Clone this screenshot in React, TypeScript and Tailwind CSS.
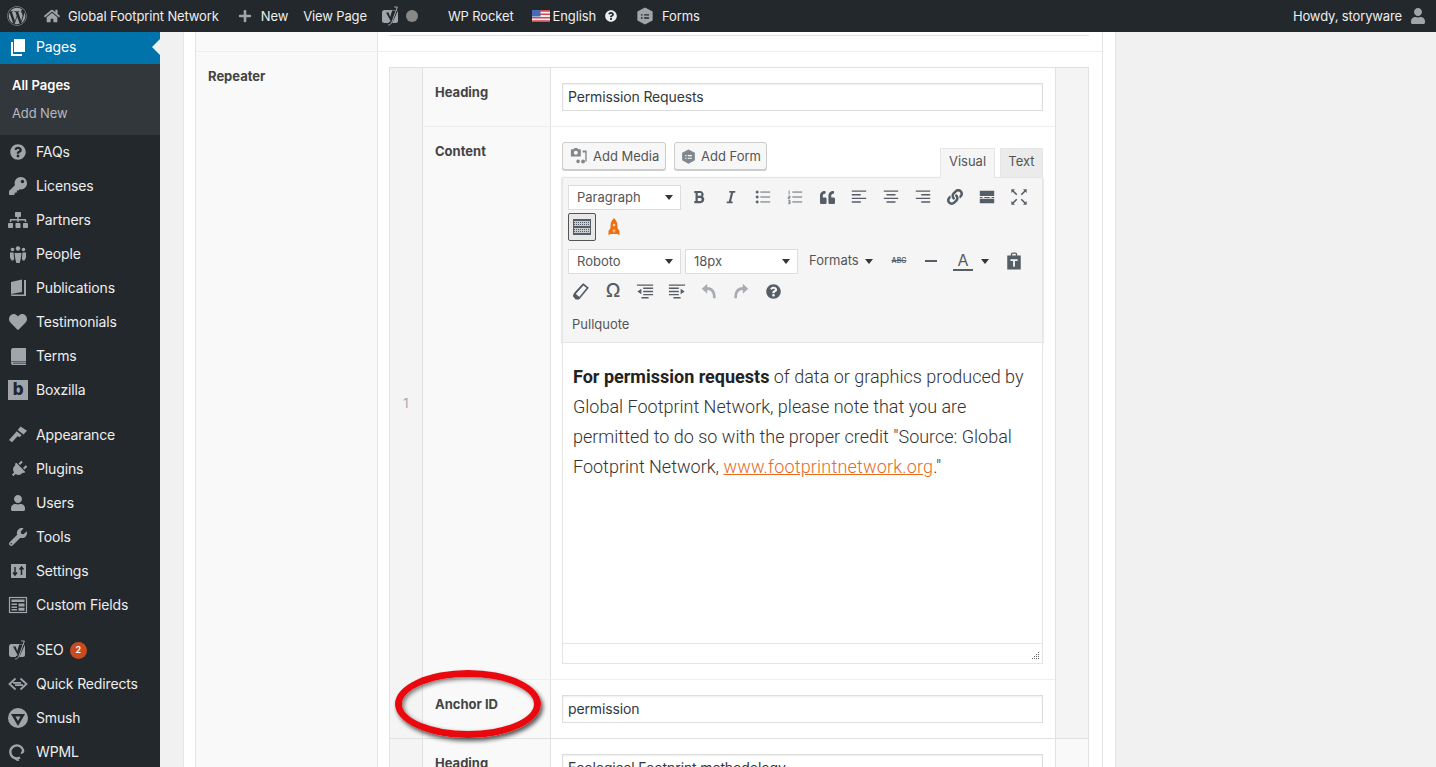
import React from "react";
import {
  FaWordpress, FaHome, FaPlus, FaKey, FaSitemap, FaHeart, FaPlug, FaUser, FaWrench, FaQuestionCircle,
  FaBold, FaItalic, FaQuoteLeft, FaLink,
} from "react-icons/fa";

const ic = "#a0a5aa";

function Yoast({ size = 20, color = ic }: { size?: number; color?: string }) {
  return (
    <svg width={size} height={size} viewBox="0 0 20 20">
      <rect x="1" y="4" width="16" height="13" rx="2.5" fill={color} />
      <path d="M5 6.5h2.6l1.6 4.4 2-6.4H17L12 15.5c-.8 2-2 3-4.2 3v-2.2c1 0 1.5-.4 1.8-1.2L5 6.5z" fill="#23282d" />
      <path d="M13.2 1l3.2 0-5.4 15c-.6 1.6-1.8 3-3.8 3" stroke={color} strokeWidth="1" fill="none" />
    </svg>
  );
}
function Pages() {
  return (
    <svg width="20" height="20" viewBox="0 0 20 20" fill="#fff">
      <path d="M6 2h11v13H6z" />
      <path d="M3 5h2v12h9v2H3z" />
    </svg>
  );
}
function Book({ variant }: { variant: number }) {
  return (
    <svg width="20" height="20" viewBox="0 0 20 20" fill={ic}>
      {variant === 0 ? (
        <>
          <path d="M3 4l11-2.5V14L3 16z" />
          <path d="M16 2h2v16H5c-1.500 0-2.500-.6-2.500-1.500h13.500z" />
        </>
      ) : (
        <>
          <path d="M5 2h13v13H5c-1 0-2 .4-2 1V4c0-1 1-2 2-2z" />
          <path d="M3 16.500c0-1 1-1 2-1h13v1.200H5v.8h13V19H5c-1 0-2-.6-2-2.500z" />
        </>
      )}
    </svg>
  );
}
function PeopleIcon() {
  return (
    <svg width="20" height="20" viewBox="0 0 20 20" fill={ic}>
      <circle cx="10" cy="4.500" r="2.200" />
      <circle cx="4.500" cy="5.500" r="1.800" />
      <circle cx="15.500" cy="5.500" r="1.800" />
      <path d="M6.500 9h7l-.8 6-1 4H8.300l-1-4z" />
      <path d="M2 8.500h3.500l.6 6-.8 2H3.500l-1.500-3z" />
      <path d="M18 8.500h-3.500l-.6 6 .8 2h1.800l1.500-3z" />
    </svg>
  );
}
function Appearance() {
  return (
    <svg width="20" height="20" viewBox="0 0 20 20" fill={ic}>
      <path d="M12.500 1.500l6.500 4.200-3.500 3.800-5.800-4.500z" />
      <path d="M8.800 6.300l4.800 4-1.800 1.700-2.300-.8-5.500 6-3-2.200 5.800-6.500z" />
    </svg>
  );
}
function Settings() {
  return (
    <svg width="20" height="20" viewBox="0 0 20 20">
      <rect x="3" y="3" width="15" height="14" fill={ic} />
      <path d="M7 6v8M5 11.500l2 2.500 2-2.500M13.500 14V6M11.500 8.500l2-2.500 2 2.500" stroke="#23282d" strokeWidth="1.500" fill="none" />
    </svg>
  );
}
function CustomFields() {
  return (
    <svg width="20" height="20" viewBox="0 0 20 20">
      <rect x="1.500" y="2.500" width="17" height="15" fill="none" stroke={ic} strokeWidth="1.200" />
      <path d="M3.500 4.500h13v2.500h-13zM3.500 8.500h5.500v1.500H3.500zM3.500 11.500h5.500v1.500H3.500zM3.500 14h5.500v1.500H3.500zM10.500 8.500h6v3h-6zM10.500 12.700h6v3h-6z" fill={ic} />
    </svg>
  );
}
function Redirects() {
  return (
    <svg width="20" height="20" viewBox="0 0 20 20" fill="none" stroke={ic} strokeWidth="1.800">
      <path d="M7.500 4.500L1.500 10l6 5.500M12.500 4.500l6 5.500-6 5.500" />
      <path d="M5 8.800h8M15 11.200H7" />
    </svg>
  );
}
function Smush() {
  return (
    <svg width="20" height="20" viewBox="0 0 20 20">
      <circle cx="10" cy="10" r="10" fill={ic} />
      <path d="M3 6h14l-7 12z" fill="#23282d" />
      <path d="M7.500 8.500h5L10 13z" fill={ic} />
    </svg>
  );
}
function Wpml() {
  return (
    <svg width="20" height="20" viewBox="0 0 20 20" fill="none" stroke={ic} strokeWidth="2.400">
      <path d="M12 15.500A6.500 6.500 0 1 1 15 8c.6 2-1 3-2 2.500" />
      <path d="M7 15c0 2.500 2 3.500 4 3" strokeWidth="1.600" />
    </svg>
  );
}
function Forms({ size = 18, fg = "#23282d", bg = ic }: { size?: number; fg?: string; bg?: string }) {
  return (
    <svg width={size} height={size} viewBox="0 0 20 20">
      <path d="M10 .5l8.500 4.500v10L10 19.500 1.500 15V5z" fill={bg} />
      <path d="M5.500 8h1.800v1.500H5.500zM9 8h5.500v1.500H9zM5.500 11.500h1.800V13H5.500zM9 11.500h5.500V13H9z" fill={fg} />
    </svg>
  );
}

function NavItem({ icon, label, badge }: { icon: React.ReactNode; label: string; badge?: string }) {
  return (
    <div className="flex h-[34px] items-center text-[14px] tracking-[-0.01em] text-[#eee]">
      <span className="flex w-9 shrink-0 items-center justify-center">{icon}</span>
      <span className="whitespace-nowrap pb-[2px]">{label}</span>
      {badge ? (
        <span className="ml-[6px] flex h-[17px] w-[17px] items-center justify-center rounded-full bg-[#ca4a1f] text-[9px] font-semibold text-white">
          {badge}
        </span>
      ) : null}
    </div>
  );
}

function Sidebar() {
  const k = { color: ic, size: 18 };
  return (
    <aside className="w-40 shrink-0 bg-[#23282d]">
      <div className="relative flex h-8 items-center bg-[#0073aa] pb-[3px] text-[14px] tracking-[-0.01em] text-white">
        <span className="flex w-9 items-center justify-center"><Pages /></span>
        Pages
        <span className="absolute right-0 top-[7px] border-y-[8px] border-r-[8px] border-y-transparent border-r-[#f1f1f1]" />
      </div>
      <div className="bg-[#32373c] pb-[7px] pl-3 pt-[8px] text-[13px]">
        <div className="flex h-7 items-center font-semibold text-white">All Pages</div>
        <div className="flex h-7 items-center tracking-[-0.01em] text-[#b4b9be]">Add New</div>
      </div>
      <NavItem icon={<FaQuestionCircle size={16} color={ic} />} label="FAQs" />
      <NavItem icon={<FaKey {...k} />} label="Licenses" />
      <NavItem icon={<FaSitemap size={20} color={ic} />} label="Partners" />
      <NavItem icon={<PeopleIcon />} label="People" />
      <NavItem icon={<Book variant={0} />} label="Publications" />
      <NavItem icon={<FaHeart {...k} />} label="Testimonials" />
      <NavItem icon={<Book variant={1} />} label="Terms" />
      <NavItem
        icon={<span className="flex h-5 w-5 items-center justify-center bg-[#a0a5aa] font-['Inter',sans-serif] text-[17px] font-extrabold text-[#23282d]">b</span>}
        label="Boxzilla"
      />
      <div className="h-[11px]" />
      <NavItem icon={<Appearance />} label="Appearance" />
      <NavItem icon={<span className="flex rotate-45"><FaPlug size={17} color={ic} /></span>} label="Plugins" />
      <NavItem icon={<FaUser size={16} color={ic} />} label="Users" />
      <NavItem icon={<FaWrench {...k} />} label="Tools" />
      <NavItem icon={<Settings />} label="Settings" />
      <NavItem icon={<CustomFields />} label="Custom Fields" />
      <div className="h-[11px]" />
      <NavItem icon={<Yoast />} label="SEO" badge="2" />
      <NavItem icon={<Redirects />} label="Quick Redirects" />
      <NavItem icon={<Smush />} label="Smush" />
      <NavItem icon={<Wpml />} label="WPML" />
    </aside>
  );
}

function Flag() {
  return (
    <svg width="18" height="12" viewBox="0 0 18 12">
      <rect width="18" height="12" fill="#f3f3f3" />
      <path d="M0 0h18v1.700H0zM0 3.400h18v1.700H0zM0 6.900h18v1.700H0zM0 10.300h18V12H0z" fill="#d9474b" />
      <rect width="8.500" height="6.500" fill="#4a69b5" />
    </svg>
  );
}

function TopBar() {
  return (
    <header className="flex h-8 shrink-0 items-center whitespace-nowrap bg-[#23282d] text-[13px] tracking-[-0.01em] text-[#eee]">
      <span className="ml-[7px] flex"><FaWordpress size={20} color={ic} /></span>
      <span className="ml-[17px] flex"><FaHome size={16} color={ic} /></span>
      <span className="ml-2 pt-[2px]">Global Footprint Network</span>
      <span className="ml-[19px] flex"><FaPlus size={14} color={ic} /></span>
      <span className="ml-[9px] pt-[2px]">New</span>
      <span className="ml-[15px] pt-[2px]">View Page</span>
      <span className="ml-[14px] flex"><Yoast /></span>
      <span className="ml-[5px] h-3 w-3 rounded-full bg-[#888]" />
      <span className="ml-[30px] pt-[2px]">WP Rocket</span>
      <span className="ml-[18px] flex"><Flag /></span>
      <span className="ml-[3px] pt-[2px]">English</span>
      <span className="ml-[9px] flex"><FaQuestionCircle size={12} color="#eee" /></span>
      <span className="ml-[19px] flex"><Forms /></span>
      <span className="ml-2 pt-[2px]">Forms</span>
      <span className="ml-auto pt-[2px]">Howdy, storyware</span>
      <span className="ml-2 mr-[10px] flex"><FaUser size={16} color={ic} /></span>
    </header>
  );
}

function Select({ w, label }: { w: string; label: string }) {
  return (
    <div className={`flex h-[25px] ${w} items-center justify-between border border-[#ddd] bg-white pl-[8px] pr-[7px] pt-[1px] text-[13px] text-[#555]`}>
      <span className="pt-[1px]">{label}</span>
      <span className="border-x-[4px] border-t-[5px] border-x-transparent border-t-[#32373c]" />
    </div>
  );
}

function Cell({ children, w = "w-8" }: { children: React.ReactNode; w?: string }) {
  return <span className={`flex h-[30px] ${w} shrink-0 items-center justify-center text-[#555d66]`}>{children}</span>;
}

const sv = { width: 18, height: 18, viewBox: "0 0 20 20", fill: "none", stroke: "#555d66", strokeWidth: 1.600 };
const Lines = ({ d }: { d: string }) => <svg {...sv}><path d={d} /></svg>;

function ListUl() {
  return (
    <svg {...sv} strokeWidth={1}>
      <path d="M7 4.500h11M7 10h11M7 15.500h11" />
      <path d="M2.500 3.500h2v2h-2zM2.500 9h2v2h-2zM2.500 14.500h2v2h-2z" fill="#555d66" />
    </svg>
  );
}
function ListOl() {
  return (
    <svg {...sv} strokeWidth={1}>
      <path d="M7 4.500h11M7 10h11M7 15.500h11" />
      <path d="M3.500 3v4M2.500 9h2v1.500h-2V12h2M2.500 14h2v3.500h-2M2.500 15.700h2" strokeWidth=".8" />
    </svg>
  );
}
function Keyboard() {
  return (
    <svg width="20" height="18" viewBox="0 0 20 18">
      <rect x="1" y="1" width="18" height="16" fill="#555d66" />
      <rect x="2" y="3" width="16" height="5" fill="#c9cbcd" />
      <rect x="2" y="10" width="16" height="5" fill="#c9cbcd" />
      <path d="M2 4.500h16M2 6.500h16M2 11.500h16M2 13.500h16" stroke="#555d66" strokeWidth="1" strokeDasharray="1 1" />
    </svg>
  );
}
function Rocket() {
  return (
    <svg width="14" height="18" viewBox="0 0 14 18">
      <path d="M7 0C9.500 2.500 10.500 5 10.500 8v2l2 3v4l-2.500-1H4l-2.500 1v-4l2-3V8C3.500 5 4.500 2.500 7 0z" fill="#ee6f13" />
      <circle cx="7" cy="7" r="1.300" fill="#f9d9b8" />
      <path d="M5.500 11.500h3l-.5 3H6z" fill="#f8b37a" />
    </svg>
  );
}
function Paste() {
  return (
    <svg width="18" height="18" viewBox="0 0 20 20">
      <path d="M2.500 4h4V2.500c0-1 .8-2 2-2h3c1.200 0 2 1 2 2V4h4v15.500h-15z" fill="#555d66" />
      <path d="M8 2h4v2H8zM6 8h8v2h-3v6.500H9V10H6z" fill="#f5f5f5" />
    </svg>
  );
}
function Eraser() {
  return (
    <svg {...sv} strokeWidth={1.800}>
      <path d="M12.500 2.500l5 4-9 11c-1 1-2 1-3.500.3-2.500-1.500-3-3-2-4.800z" />
      <path d="M12.500 2.500l-9.500 10.500" fill="none" />
      <path d="M3 13.500L8 17.500l-1 1H4.500L2 15.500z" fill="#555d66" />
    </svg>
  );
}
function Outdent() {
  return (
    <svg width="18" height="18" viewBox="0 0 20 20" stroke="#555d66" strokeWidth="1.600" fill="none">
      <path d="M1 3.500h18M8 7h11M8 10.500h11M8 14h11M6 17.500h8" />
      <path d="M6 7.500L1.500 10.500 6 13.500z" fill="#555d66" strokeWidth="0" />
    </svg>
  );
}
function Indent() {
  return (
    <svg width="18" height="18" viewBox="0 0 20 20" stroke="#555d66" strokeWidth="1.600" fill="none">
      <path d="M1 3.500h18M1 7h11M1 10.500h11M1 14h11M6 17.500h8" />
      <path d="M14 7.500l4.500 3-4.500 3z" fill="#555d66" strokeWidth="0" />
    </svg>
  );
}
function Undo({ flip }: { flip?: boolean }) {
  return (
    <svg width="18" height="18" viewBox="0 0 20 20" className={flip ? "-scale-x-100" : ""}>
      <path d="M2 7.500L8 2v3.500c6 0 9.500 4 9.500 12.500h-3c0-6-2-9-6.500-9v4z" fill="#a9adb1" />
    </svg>
  );
}
function More() {
  return (
    <svg width="18" height="18" viewBox="0 0 20 20" fill="#555d66">
      <path d="M2 3h16v6H2zM2 12h16v5H2z" />
      <path d="M2 10h3v1H2zM7 10h6v1H7zM15 10h3v1h-3z" />
    </svg>
  );
}
function Fullscreen() {
  return (
    <svg {...sv} strokeWidth={1.800}>
      <path d="M2.500 2.500l5 5M17.500 2.500l-5 5M2.500 17.500l5-5M17.500 17.500l-5-5" />
      <path d="M1.500 1.500h4l-4 4zM18.500 1.500h-4l4 4zM1.500 18.500h4l-4-4zM18.500 18.500h-4l4-4z" fill="#555d66" stroke="none" />
    </svg>
  );
}
function MediaIcon() {
  return (
    <svg width="18" height="18" viewBox="0 0 20 20" fill="#82878c">
      <path d="M1 2.500h3l1-1.500h3l1 1.500h3v8H1z" />
      <circle cx="6.500" cy="6.300" r="2.200" fill="#f7f7f7" />
      <path d="M14 4h4.500v12h-1.500V6H14zM9 14a2 2 0 1 1-.1 0zM14.500 14a2.200 2.200 0 1 1 0 4.400 2.200 2.200 0 0 1 0-4.400z" />
    </svg>
  );
}

function Editor() {
  return (
    <div className="w-[481px]">
      <div className="flex h-[35px] items-start text-[13px]">
        <div className="flex h-7 w-[104px] items-center rounded-[3px] border border-[#ccc] bg-[#f7f7f7] pl-[7px] text-[#555] shadow-[0_1px_0_#ccc]">
          <MediaIcon />
          <span className="ml-[5px] pt-[2px]">Add Media</span>
        </div>
        <div className="ml-2 flex h-7 w-[93px] items-center rounded-[3px] border border-[#ccc] bg-[#f7f7f7] pl-[6px] text-[#555] shadow-[0_1px_0_#ccc]">
          <Forms size={15} fg="#f7f7f7" bg="#82878c" />
          <span className="ml-[5px] pt-[2px]">Add Form</span>
        </div>
        <div className="ml-auto mt-[6px] flex h-[30px] w-[55px] items-center justify-center border-x border-t border-[#e5e5e5] bg-[#f5f5f5] pb-[3px] text-[13px] text-[#555]">Visual</div>
        <div className="relative ml-[5px] mt-[6px] flex h-[29px] w-[43px] items-center justify-center border-x border-t border-[#e5e5e5] bg-[#ebebeb] pb-[3px] text-[13px] text-[#555]">Text</div>
      </div>
      <div className="h-[166px] border border-[#e5e5e5] bg-[#f5f5f5] shadow-[0_1px_2px_rgba(0,0,0,0.25)]">
        <div className="flex items-center pl-[5px] pt-1">
          <Select w="w-[113px]" label="Paragraph" />
          <span className="ml-[2px]" />
          <Cell><FaBold size={14} /></Cell>
          <Cell><FaItalic size={14} /></Cell>
          <Cell><ListUl /></Cell>
          <Cell><ListOl /></Cell>
          <Cell><FaQuoteLeft size={15} /></Cell>
          <Cell><Lines d="M2 3.500h16M2 7.500h10M2 11.500h16M2 15.500h10" /></Cell>
          <Cell><Lines d="M2 3.500h16M5 7.500h10M2 11.500h16M5 15.500h10" /></Cell>
          <Cell><Lines d="M2 3.500h16M8 7.500h10M2 11.500h16M8 15.500h10" /></Cell>
          <Cell><FaLink size={16} /></Cell>
          <Cell><More /></Cell>
          <Cell><Fullscreen /></Cell>
        </div>
        <div className="flex h-[30px] items-center pl-[5px]">
          <span className="flex h-7 w-7 items-center justify-center rounded-[2px] border border-[#555] bg-[#e8e8e8]"><Keyboard /></span>
          <span className="ml-[2px]" />
          <Cell><Rocket /></Cell>
        </div>
        <div className="mt-1 flex items-center pl-[5px]">
          <Select w="w-[113px]" label="Roboto" />
          <span className="ml-1" />
          <Select w="w-[113px]" label="18px" />
          <span className="flex h-[30px] w-[85px] items-center pl-[11px] text-[13px] text-[#555]">
            Formats
            <span className="ml-[6px] border-x-[4px] border-t-[5px] border-x-transparent border-t-[#32373c]" />
          </span>
          <Cell><span className="text-[7px] font-semibold line-through">ABC</span></Cell>
          <Cell><span className="h-[2px] w-3 bg-[#555d66]" /></Cell>
          <Cell>
            <span className="flex flex-col items-center text-[16px] leading-[16px] text-[#555d66]">
              A
              <span className="mt-[1px] h-[2px] w-5 bg-[#555d66]" />
            </span>
          </Cell>
          <Cell w="w-3"><span className="border-x-[4px] border-t-[5px] border-x-transparent border-t-[#32373c]" /></Cell>
          <span className="ml-[7px]" />
          <Cell><Paste /></Cell>
        </div>
        <div className="flex items-center pl-[2px]">
          <Cell><Eraser /></Cell>
          <Cell><span className="font-['Inter',sans-serif] text-[19px] font-medium">Ω</span></Cell>
          <Cell><Outdent /></Cell>
          <Cell><Indent /></Cell>
          <Cell><Undo /></Cell>
          <Cell><Undo flip /></Cell>
          <Cell><FaQuestionCircle size={15} /></Cell>
        </div>
        <div className="pl-[9px] pt-[9px] text-[13px] text-[#555]">Pullquote</div>
      </div>
      <div className="h-[300px] border-x border-[#e5e5e5] bg-white px-[10px] pt-[19px] font-['Roboto',sans-serif] text-[18px] font-light leading-[30px] text-[#333]">
        <p>
          <strong className="font-bold text-[#222]">For permission requests</strong> of data or graphics produced by Global Footprint Network, please note that you are permitted to do so with the proper credit "Source: Global Footprint Network,{" "}
          <span className="tracking-[0.01em] text-[#e8691f] underline">www.footprintnetwork.org</span>."
        </p>
      </div>
      <div className="flex h-[21px] items-end justify-end border border-[#e5e5e5] bg-white p-[2px]">
        <svg width="10" height="10" viewBox="0 0 10 10" fill="#666">
          <path d="M8 1h1v1H8zM6 3h1v1H6zM8 3h1v1H8zM4 5h1v1H4zM6 5h1v1H6zM8 5h1v1H8zM2 7h1v1H2zM4 7h1v1H4zM6 7h1v1H6zM8 7h1v1H8z" />
        </svg>
      </div>
    </div>
  );
}

function TextInput({ value }: { value: string }) {
  return (
    <input
      readOnly
      value={value}
      className="block h-7 w-[481px] border border-[#ddd] bg-white px-[5px] pb-[2px] text-[14px] tracking-[-0.01em] text-[#32373c] shadow-[inset_0_1px_2px_rgba(0,0,0,0.07)] outline-none"
    />
  );
}

function SubField({ label, children, last }: { label: string; children: React.ReactNode; last?: boolean }) {
  return (
    <div className={`flex ${last ? "" : "border-b border-[#eee]"}`}>
      <div className="w-[128px] shrink-0 border-r border-[#e1e1e1] bg-[#f9f9f9] pl-3 pt-[14px] text-[13px] font-bold leading-5 text-[#444]">{label}</div>
      <div className="w-[504px] shrink-0 bg-white px-[11px] py-[15px]">{children}</div>
    </div>
  );
}

function MainContent() {
  return (
    <main className="ml-[23px] h-[735px] w-[933px] overflow-hidden border-x border-[#e5e5e5] bg-white px-[11px]">
      <div className="w-[908px] border-x border-[#e5e5e5]">
        <div className="flex h-5 border-b border-[#eee]">
          <div className="w-[182px] shrink-0 border-r border-[#e5e5e5] bg-[#f9f9f9]" />
          <div className="flex-1 pl-[11px]">
            <div className="h-[4px] w-[700px] border-b border-[#e1e1e1]" />
          </div>
        </div>
        <div className="flex">
          <div className="w-[182px] shrink-0 border-r border-[#e5e5e5] bg-[#f9f9f9] pl-3 pt-[14px] text-[13px] font-bold leading-5 text-[#444]">Repeater</div>
          <div className="flex-1 pl-[11px] pt-[15px]">
            <div className="w-[700px] border-x border-t border-[#e1e1e1]">
              <div className="flex border-b border-[#e1e1e1]">
                <div className="flex w-[33px] shrink-0 items-center justify-center border-r border-[#e1e1e1] bg-[#f4f4f4] pt-[2px] text-[13px] text-[#aaa]">1</div>
                <div className="w-[633px] shrink-0 border-r border-[#e1e1e1]">
                  <SubField label="Heading"><TextInput value="Permission Requests" /></SubField>
                  <SubField label="Content"><Editor /></SubField>
                  <SubField label="Anchor ID" last><TextInput value="permission" /></SubField>
                </div>
                <div className="flex-1 bg-[#f4f4f4]" />
              </div>
              <div className="flex">
                <div className="w-[33px] shrink-0 border-r border-[#e1e1e1] bg-[#f4f4f4]" />
                <div className="w-[633px] shrink-0 border-r border-[#e1e1e1]">
                  <SubField label="Heading" last><TextInput value="Ecological Footprint methodology" /></SubField>
                </div>
                <div className="flex-1 bg-[#f9f9f9]" />
              </div>
            </div>
          </div>
        </div>
      </div>
    </main>
  );
}

export default function App() {
  return (
    <div className="relative flex h-[767px] w-[1436px] flex-col overflow-hidden bg-[#f1f1f1] font-['Inter',sans-serif]">
      <TopBar />
      <div className="flex min-h-0 flex-1">
        <Sidebar />
        <MainContent />
      </div>
      <div className="absolute left-[395px] top-[670px] h-[68px] w-[146px] rounded-[50%] border-[7px] border-[#e8080e] shadow-[2px_3px_4px_rgba(0,0,0,0.65),inset_2px_2px_4px_rgba(0,0,0,0.5)]" />
    </div>
  );
}
